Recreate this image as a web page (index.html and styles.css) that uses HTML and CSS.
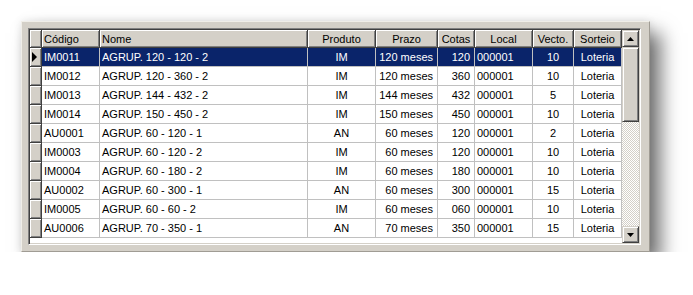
FILE: index.html
```html
<!DOCTYPE html>
<html lang="pt">
<head>
<meta charset="utf-8">
<title>Grupos</title>
<link rel="stylesheet" href="styles.css">
</head>
<body>
<div class="panel">
  <div class="frame">
    <div class="grid">
      <div class="hd ind"></div>
      <div class="hd left">Código</div>
      <div class="hd left">Nome</div>
      <div class="hd">Produto</div>
      <div class="hd">Prazo</div>
      <div class="hd">Cotas</div>
      <div class="hd">Local</div>
      <div class="hd">Vecto.</div>
      <div class="hd">Sorteio</div>

      <div class="ind"><svg class="arrow" width="6" height="10" viewBox="0 0 6 10"><path d="M0 0 L5 5 L0 10 Z" fill="#000"/></svg></div>
      <div class="c sel">IM0011</div><div class="c sel">AGRUP. 120 - 120 - 2</div><div class="c sel ctr">IM</div><div class="c sel rt">120 meses</div><div class="c sel rt">120</div><div class="c sel">000001</div><div class="c sel ctr">10</div><div class="c sel ctr">Loteria</div>

      <div class="ind"></div>
      <div class="c">IM0012</div><div class="c">AGRUP. 120 - 360 - 2</div><div class="c ctr">IM</div><div class="c rt">120 meses</div><div class="c rt">360</div><div class="c">000001</div><div class="c ctr">10</div><div class="c ctr">Loteria</div>

      <div class="ind"></div>
      <div class="c">IM0013</div><div class="c">AGRUP. 144 - 432 - 2</div><div class="c ctr">IM</div><div class="c rt">144 meses</div><div class="c rt">432</div><div class="c">000001</div><div class="c ctr">5</div><div class="c ctr">Loteria</div>

      <div class="ind"></div>
      <div class="c">IM0014</div><div class="c">AGRUP. 150 - 450 - 2</div><div class="c ctr">IM</div><div class="c rt">150 meses</div><div class="c rt">450</div><div class="c">000001</div><div class="c ctr">10</div><div class="c ctr">Loteria</div>

      <div class="ind"></div>
      <div class="c">AU0001</div><div class="c">AGRUP. 60 - 120 - 1</div><div class="c ctr">AN</div><div class="c rt">60 meses</div><div class="c rt">120</div><div class="c">000001</div><div class="c ctr">2</div><div class="c ctr">Loteria</div>

      <div class="ind"></div>
      <div class="c">IM0003</div><div class="c">AGRUP. 60 - 120 - 2</div><div class="c ctr">IM</div><div class="c rt">60 meses</div><div class="c rt">120</div><div class="c">000001</div><div class="c ctr">10</div><div class="c ctr">Loteria</div>

      <div class="ind"></div>
      <div class="c">IM0004</div><div class="c">AGRUP. 60 - 180 - 2</div><div class="c ctr">IM</div><div class="c rt">60 meses</div><div class="c rt">180</div><div class="c">000001</div><div class="c ctr">10</div><div class="c ctr">Loteria</div>

      <div class="ind"></div>
      <div class="c">AU0002</div><div class="c">AGRUP. 60 - 300 - 1</div><div class="c ctr">AN</div><div class="c rt">60 meses</div><div class="c rt">300</div><div class="c">000001</div><div class="c ctr">15</div><div class="c ctr">Loteria</div>

      <div class="ind"></div>
      <div class="c">IM0005</div><div class="c">AGRUP. 60 - 60 - 2</div><div class="c ctr">IM</div><div class="c rt">60 meses</div><div class="c rt">060</div><div class="c">000001</div><div class="c ctr">10</div><div class="c ctr">Loteria</div>

      <div class="ind"></div>
      <div class="c">AU0006</div><div class="c">AGRUP. 70 - 350 - 1</div><div class="c ctr">AN</div><div class="c rt">70 meses</div><div class="c rt">350</div><div class="c">000001</div><div class="c ctr">15</div><div class="c ctr">Loteria</div>
    </div>
    <div class="scroll">
      <div class="sbtn"><svg width="7" height="4" viewBox="0 0 7 4"><path d="M3.5 0 L7 4 L0 4 Z" fill="#000"/></svg></div>
      <div class="track">
        <div class="thumb"></div>
        <div class="rest"></div>
      </div>
      <div class="sbtn"><svg width="7" height="4" viewBox="0 0 7 4"><path d="M0 0 L7 0 L3.5 4 Z" fill="#000"/></svg></div>
    </div>
  </div>
</div>
</body>
</html>
```
FILE: styles.css
```css
* { box-sizing: border-box; }

body {
  margin: 0;
  background: #ffffff;
  font-family: "Liberation Sans", Arial, sans-serif;
  font-size: 11px;
  color: #000;
}

.panel {
  margin: 21px 0 0 21px;
  width: 629px;
  height: 231px;
  background: #d4d0c8;
  border: 1px solid;
  border-color: #f0eee8 #a09c94 #a09c94 #f0eee8;
  padding: 6px 8px 6px 6px;
  box-shadow: 11px 12px 18px rgba(0, 0, 0, 0.55), 0 0 8px rgba(0, 0, 0, 0.1);
}

.frame {
  display: flex;
  width: 613px;
  height: 217px;
  background: #ffffff;
  border: 1px solid;
  border-color: #808080 #ffffff #ffffff #808080;
  box-shadow: inset 1px 1px 0 #404040, inset -1px -1px 0 #d4d0c8;
  padding: 1px;
}

.grid {
  display: grid;
  grid-template-columns: 12px 58px 208px 68px 62px 37px 58px 41px 48px;
  grid-template-rows: 18px repeat(10, 19px);
  align-content: start;
  width: 592px;
}

.hd {
  background: #d4d0c8;
  border-right: 1px solid #404040;
  border-bottom: 1px solid #404040;
  box-shadow: inset 1px 1px 0 #ffffff, inset -1px -1px 0 #808080;
  display: flex;
  align-items: center;
  justify-content: center;
  padding: 0 2px;
  white-space: nowrap;
}

.hd.left { justify-content: flex-start; }

.ind {
  background: #d4d0c8;
  border-right: 1px solid #404040;
  border-bottom: 1px solid #404040;
  box-shadow: inset 1px 1px 0 #ffffff, inset -1px -1px 0 #808080;
  display: flex;
  align-items: center;
  padding-left: 2px;
}

.c {
  border-right: 1px solid #c0c0c0;
  border-bottom: 1px solid #c0c0c0;
  display: flex;
  align-items: center;
  padding: 0 2px;
  white-space: nowrap;
  overflow: hidden;
}

.c.ctr { justify-content: center; }
.c.rt { justify-content: flex-end; padding-right: 4px; }

.c.sel {
  background: #0a246a;
  color: #ffffff;
}

.scroll {
  width: 17px;
  display: flex;
  flex-direction: column;
}

.sbtn {
  width: 17px;
  height: 17px;
  flex: none;
  background: #d4d0c8;
  border: 1px solid;
  border-color: #d4d0c8 #404040 #404040 #d4d0c8;
  box-shadow: inset 1px 1px 0 #ffffff, inset -1px -1px 0 #808080;
  display: flex;
  align-items: center;
  justify-content: center;
}

.track {
  flex: 1;
  display: flex;
  flex-direction: column;
  background-color: #ffffff;
  background-image: conic-gradient(#d4d0c8 25%, #ffffff 0 50%, #d4d0c8 0 75%, #ffffff 0);
  background-size: 2px 2px;
}

.thumb {
  height: 75px;
  flex: none;
  background: #d4d0c8;
  border: 1px solid;
  border-color: #d4d0c8 #404040 #404040 #d4d0c8;
  box-shadow: inset 1px 1px 0 #ffffff, inset -1px -1px 0 #808080;
}

.rest { flex: 1; }
```
